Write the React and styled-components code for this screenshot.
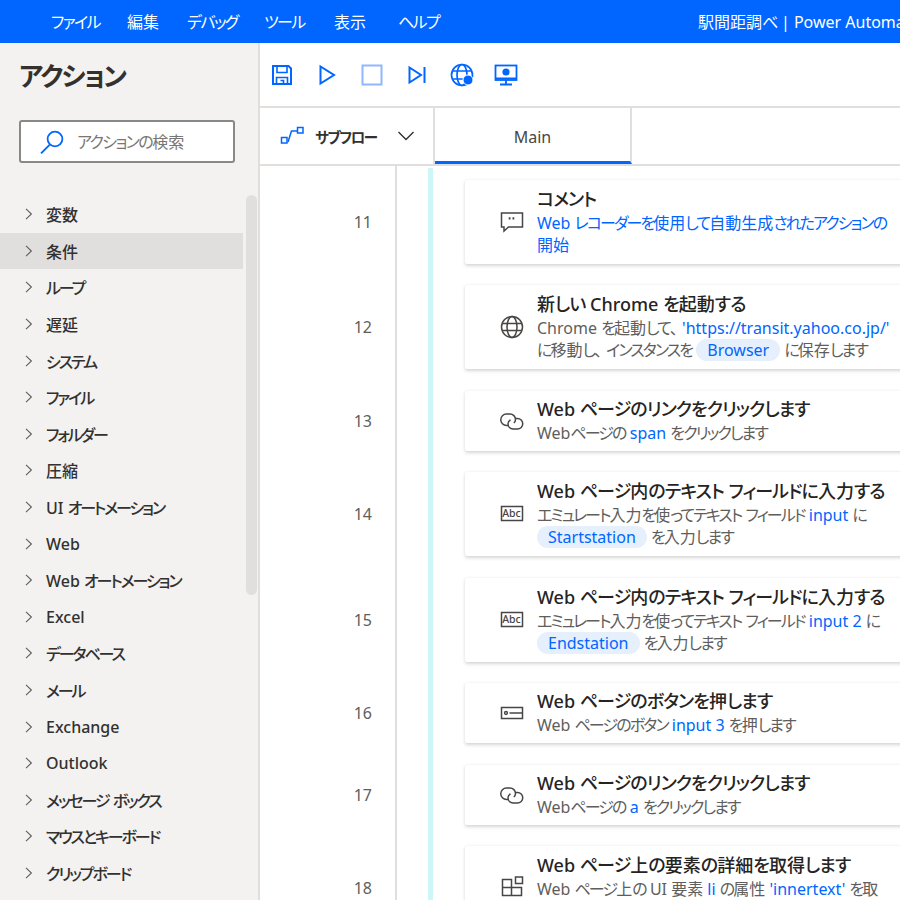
import React from 'react'
import styled, { createGlobalStyle } from 'styled-components'

const BLUE = '#0066ff'

const GlobalStyle = createGlobalStyle`
  html, body { margin: 0; padding: 0; background: #fff; }
  body {
    font-family: "Noto Sans", "Noto Sans CJK JP", sans-serif;
    font-feature-settings: "palt" 1;
    color: #252423;
  }
`

const Page = styled.div`
  width: 900px;
  height: 900px;
  overflow: hidden;
  display: flex;
  flex-direction: column;
`

const Header = styled.header`
  flex: 0 0 43px;
  box-sizing: border-box;
  background: ${BLUE};
  color: #fff;
  display: flex;
  align-items: center;
  padding: 0 0 2px 51px;
  font-size: 16px;
  white-space: nowrap;
  overflow: hidden;
`

const Menu = styled.nav`
  flex: 0 0 647px;
  display: flex;
`

const MenuItem = styled.span`
  flex: 0 0 ${(p) => p.$w}px;
`

// the original UI font sets kana much tighter than Noto does
const Kana = styled.span`
  letter-spacing: ${(p) => p.$ls || '-0.1em'};
`

const Comma = styled.span`
  letter-spacing: 4px;
`

const k = (text, ls) =>
  text.split(/([\u3041-\u30ff]+)/).map((part, i) =>
    i % 2 ? <Kana key={i} $ls={ls}>{part}</Kana> : part
  )

const sub = (text) => k(text, '-0.12em')

const Body = styled.div`
  flex: 1;
  display: flex;
  min-height: 0;
`

const Sidebar = styled.aside`
  flex: 0 0 258px;
  background: #f3f2f1;
  border-right: 2px solid #e1dfdd;
  display: flex;
  flex-direction: column;
  overflow: hidden;
`

const SidebarTitle = styled.h1`
  margin: 16px 0 0 19px;
  font-size: 26px;
  line-height: 34px;
  font-weight: 700;
  color: #323130;
`

const SearchBox = styled.div`
  margin: 27px 0 0 19px;
  width: 216px;
  height: 43px;
  box-sizing: border-box;
  background: #fff;
  border: 2px solid #8a8886;
  border-radius: 3px;
  display: flex;
  align-items: center;
  padding-left: 19px;
  gap: 13px;
  font-size: 16px;
  color: #797775;
`

const Placeholder = styled.span`
  padding-bottom: 2px;
`

const ListArea = styled.div`
  flex: 1;
  display: flex;
  margin-top: 33px;
  min-height: 0;
`

const ActionList = styled.ul`
  flex: 0 0 243px;
  margin: 0;
  padding: 0;
  list-style: none;
  display: flex;
  flex-direction: column;
`

const ActionItem = styled.li`
  flex: 0 0 36.6px;
  display: flex;
  align-items: center;
  padding-left: 25px;
  gap: 13px;
  font-size: 16px;
  font-weight: 500;
  color: #323130;
  white-space: nowrap;
  background: ${(p) => (p.$active ? '#e1dfdd' : 'transparent')};
`

const ScrollThumb = styled.div`
  margin: -1px 0 0 3px;
  width: 11px;
  height: 400px;
  border-radius: 6px;
  background: #e1dfdd;
`

const Main = styled.main`
  flex: 1;
  min-width: 0;
  display: flex;
  flex-direction: column;
  overflow: hidden;
`

const Toolbar = styled.div`
  flex: 0 0 63px;
  border-bottom: 2px solid #e1dfdd;
  display: flex;
  align-items: center;
`

const ToolButton = styled.div`
  flex: 0 0 44.8px;
  display: flex;
  justify-content: center;
`

const TabRow = styled.div`
  flex: 0 0 56px;
  border-bottom: 2px solid #e1dfdd;
  display: flex;
`

const SubflowTab = styled.div`
  flex: 0 0 175px;
  box-sizing: border-box;
  border-right: 2px solid #e1dfdd;
  display: flex;
  align-items: center;
  padding-left: 20px;
  font-size: 14.5px;
  font-weight: 700;
  color: #323130;
`

const SubflowLabel = styled.span`
  flex: 0 0 93px;
  padding-left: 11px;
  box-sizing: border-box;
`

const MainTab = styled.div`
  flex: 0 0 197px;
  box-sizing: border-box;
  border-right: 2px solid #e1dfdd;
  border-bottom: 3px solid ${BLUE};
  padding-top: 4px;
  display: flex;
  align-items: center;
  justify-content: center;
  font-size: 16px;
  color: #484644;
`

const Flow = styled.div`
  flex: 1;
  min-height: 0;
  display: flex;
  flex-direction: column;
  gap: 21.5px;
  padding-top: 13.8px;
  background:
    linear-gradient(#e1dfdd, #e1dfdd) 135px 0 / 2px 100% no-repeat,
    linear-gradient(#cdf6f6, #cdf6f6) 168px 2px / 5px 100% no-repeat;
`

const Row = styled.div`
  display: flex;
  align-items: center;
  flex-shrink: 0;
`

const LineNo = styled.div`
  flex: 0 0 112px;
  margin-right: 93px;
  text-align: right;
  font-size: 16px;
  color: #605e5c;
`

const Card = styled.article`
  flex: 0 0 560px;
  height: ${(p) => (p.$short ? 60 : 84)}px;
  box-sizing: border-box;
  border-radius: 2px;
  background: #fff;
  box-shadow: 0 1.6px 3.6px rgba(0, 0, 0, 0.16), 0 0 1px rgba(0, 0, 0, 0.05);
  display: flex;
  align-items: center;
  padding-left: 35px;
  gap: 13px;
`

const CardText = styled.div`
  white-space: nowrap;
`

const CardTitle = styled.div`
  font-size: 18px;
  line-height: 22px;
  padding-bottom: 2px;
  font-weight: 500;
  color: #252423;
`

const CardLine = styled.div`
  font-size: 16px;
  line-height: 22px;
  color: #605e5c;
`

const Link = styled.span`
  color: ${BLUE};
`

const Chip = styled.span`
  display: inline-block;
  line-height: 22px;
  padding: 0 11px;
  border-radius: 11px;
  background: #e6effc;
  color: ${BLUE};
`

const Chevron = () => (
  <svg width="8" height="12" viewBox="0 0 8 12" fill="none" stroke="#605e5c" strokeWidth="1.1">
    <path d="M1 .8 6.400 6 1 11.200" />
  </svg>
)

const blueIcon = { fill: 'none', stroke: BLUE, strokeWidth: 2 }

const SaveIcon = () => (
  <svg width="22" height="22" viewBox="0 0 22 22" {...blueIcon}>
    <path d="M2 2h15.500l2.500 2.500V20H2z" />
    <path d="M6 2v6.500h10V2M5.500 20v-6.500h11V20M9.500 16.500h3V20" strokeWidth="1.6" />
  </svg>
)

const PlayIcon = () => (
  <svg width="18" height="22" viewBox="0 0 18 22" {...blueIcon}>
    <path d="M2.500 2.500v17L16 11z" />
  </svg>
)

const StopIcon = () => (
  <svg width="22" height="22" viewBox="0 0 22 22" fill="none" stroke="#8db8ff" strokeWidth="2">
    <rect x="1.500" y="1.500" width="19" height="19" />
  </svg>
)

const NextIcon = () => (
  <svg width="20" height="22" viewBox="0 0 20 22" {...blueIcon}>
    <path d="M2.500 3.500v15L14 11zM17.500 3v16" />
  </svg>
)

const GlobeDotIcon = () => (
  <svg width="24" height="24" viewBox="0 0 24 24" fill="none" stroke={BLUE} strokeWidth="1.7">
    <circle cx="12" cy="12" r="10.500" />
    <ellipse cx="12" cy="12" rx="5" ry="10.500" />
    <path d="M2 8h20M2 16h20" />
    <circle cx="18" cy="17" r="5" fill={BLUE} stroke="#fff" strokeWidth="1" />
  </svg>
)

const MonitorIcon = () => (
  <svg width="24" height="22" viewBox="0 0 24 22" fill="none" stroke={BLUE} strokeWidth="1.800">
    <rect x="1.500" y="1.500" width="21" height="14.500" />
    <path d="M1.500 14.500h21M12 16v4M6 20.500h12" />
    <circle cx="12" cy="8" r="3.600" fill={BLUE} stroke="none" />
  </svg>
)

const SearchIcon = () => (
  <svg width="24" height="24" viewBox="0 0 24 24" fill="none" stroke={BLUE} strokeWidth="1.8">
    <circle cx="15" cy="9" r="7.400" />
    <path d="M9.800 14.600 1 23.400" />
  </svg>
)

const SubflowIcon = () => (
  <svg width="24" height="20" viewBox="0 0 24 20" fill="none" stroke={BLUE} strokeWidth="1.5">
    <rect x="1.500" y="11.500" width="5.500" height="5.500" />
    <rect x="17.500" y="1.500" width="5.500" height="5.500" />
    <path d="M8 16 11.500 5H17" />
  </svg>
)

const DownIcon = () => (
  <svg width="18" height="12" viewBox="0 0 18 12" fill="none" stroke="#323130" strokeWidth="1.4">
    <path d="M1.500 2 9 9.500 16.500 2" />
  </svg>
)

const gray = { fill: 'none', stroke: '#484644', strokeWidth: 1.5 }

const CommentIcon = () => (
  <svg width="24" height="24" viewBox="0 0 24 24" {...gray}>
    <path d="M1.500 3h21v14H8.500l-4.500 4v-4H1.500z" />
    <path d="M9.600 7.200v2.400M13.400 7.200v2.400" strokeWidth="1.800" />
  </svg>
)

const GlobeIcon = () => (
  <svg width="24" height="24" viewBox="0 0 24 24" {...gray}>
    <circle cx="12" cy="12" r="10.500" />
    <ellipse cx="12" cy="12" rx="5" ry="10.500" />
    <path d="M2 8.500h20M2 15.500h20" />
  </svg>
)

const LinkIcon = () => (
  <svg width="24" height="24" viewBox="0 0 24 24" {...gray}>
    <path d="M8 16.500H6.500a5.700 5.700 0 0 1 0-11.500H10a5.500 5.500 0 0 1 5.500 5.500c0 1.500-.6 2.700-1.700 3.500" />
    <path d="M16 9.500h1.500a5.200 5.200 0 0 1 0 10.500H13a5.200 5.200 0 0 1-5-5.200c0-1.800 1-3.200 2.500-4" />
  </svg>
)

const AbcIcon = () => (
  <svg width="24" height="24" viewBox="0 0 24 24" {...gray}>
    <rect x="1.500" y="4.500" width="21" height="14" />
    <text x="11.500" y="15" textAnchor="middle" fontSize="10.500" fontWeight="500" fill="#484644" stroke="none">Abc</text>
  </svg>
)

const ButtonIcon = () => (
  <svg width="24" height="24" viewBox="0 0 24 24" {...gray}>
    <rect x="1.500" y="6.500" width="21" height="11" />
    <circle cx="6" cy="12" r="1.400" />
    <path d="M9.500 12h13" />
  </svg>
)

const ElementIcon = () => (
  <svg width="24" height="24" viewBox="0 0 24 24" {...gray}>
    <path d="M2.500 3.500h9v16h-9zM2.500 11.500h19v8h-10" />
    <rect x="15.500" y="1" width="7" height="6.500" />
  </svg>
)

const MENU = [
  { label: 'ファイル', w: 76 },
  { label: '編集', w: 60 },
  { label: 'デバッグ', w: 77 },
  { label: 'ツール', w: 70 },
  { label: '表示', w: 64 },
  { label: 'ヘルプ', w: 60 },
]

const ACTIONS = [
  '変数', '条件', 'ループ', '遅延', 'システム', 'ファイル', 'フォルダー', '圧縮', 'UI オートメーション',
  'Web', 'Web オートメーション', 'Excel', 'データベース', 'メール', 'Exchange', 'Outlook',
  'メッセージ ボックス', 'マウスとキーボード', 'クリップボード',
]

const STEPS = [
  {
    no: 11, icon: <CommentIcon />, title: 'コメント',
    lines: [<Link>{sub('Web レコーダーを使用して自動生成されたアクションの')}</Link>, <Link>開始</Link>],
  },
  {
    no: 12, icon: <GlobeIcon />, title: '新しい Chrome を起動する',
    lines: [
      <>{sub('Chrome を起動して、 ')}<Link>'https://transit.yahoo.co.jp/'</Link></>,
      <>{sub('に移動し')}<Comma>、</Comma>{sub('インスタンスを ')}<Chip>Browser</Chip>{sub(' に保存します')}</>,
    ],
  },
  {
    no: 13, icon: <LinkIcon />, title: 'Web ページのリンクをクリックします', short: true,
    lines: [<>{sub('Webページの ')}<Link>span</Link>{sub(' をクリックします')}</>],
  },
  {
    no: 14, icon: <AbcIcon />, title: 'Web ページ内のテキスト フィールドに入力する',
    lines: [
      <>{sub('エミュレート入力を使ってテキスト フィールド ')}<Link>input</Link>{sub(' に')}</>,
      <><Chip>Startstation</Chip>{sub(' を入力します')}</>,
    ],
  },
  {
    no: 15, icon: <AbcIcon />, title: 'Web ページ内のテキスト フィールドに入力する',
    lines: [
      <>{sub('エミュレート入力を使ってテキスト フィールド ')}<Link>input 2</Link>{sub(' に')}</>,
      <><Chip>Endstation</Chip>{sub(' を入力します')}</>,
    ],
  },
  {
    no: 16, icon: <ButtonIcon />, title: 'Web ページのボタンを押します', short: true,
    lines: [<>{sub('Web ページのボタン ')}<Link>input 3</Link>{sub(' を押します')}</>],
  },
  {
    no: 17, icon: <LinkIcon />, title: 'Web ページのリンクをクリックします', short: true,
    lines: [<>{sub('Webページの ')}<Link>a</Link>{sub(' をクリックします')}</>],
  },
  {
    no: 18, icon: <ElementIcon />, title: 'Web ページ上の要素の詳細を取得します',
    lines: [
      <>{sub('Web ページ上の UI 要素 ')}<Link>li</Link>{sub(' の属性 ')}<Link>'innertext'</Link>{sub(' を取')}</>,
      <>{sub('得します')}</>,
    ],
  },
]

const TOOLS = [SaveIcon, PlayIcon, StopIcon, NextIcon, GlobeDotIcon, MonitorIcon]

export default function App() {
  return (
    <Page>
      <GlobalStyle />
      <Header>
        <Menu>
          {MENU.map((m) => (
            <MenuItem key={m.label} $w={m.w}>{k(m.label)}</MenuItem>
          ))}
        </Menu>
        <span>{k('駅間距調べ | Power Automate')}</span>
      </Header>
      <Body>
        <Sidebar>
          <SidebarTitle>{k('アクション', '-0.07em')}</SidebarTitle>
          <SearchBox>
            <SearchIcon />
            <Placeholder>{k('アクションの検索')}</Placeholder>
          </SearchBox>
          <ListArea>
            <ActionList>
              {ACTIONS.map((a) => (
                <ActionItem key={a} $active={a === '条件'}>
                  <Chevron />
                  <span>{k(a, '-0.13em')}</span>
                </ActionItem>
              ))}
            </ActionList>
            <ScrollThumb />
          </ListArea>
        </Sidebar>
        <Main>
          <Toolbar>
            {TOOLS.map((Icon, i) => (
              <ToolButton key={i}>
                <Icon />
              </ToolButton>
            ))}
          </Toolbar>
          <TabRow>
            <SubflowTab>
              <SubflowIcon />
              <SubflowLabel>{k('サブフロー')}</SubflowLabel>
              <DownIcon />
            </SubflowTab>
            <MainTab>Main</MainTab>
          </TabRow>
          <Flow>
            {STEPS.map((s) => (
              <Row key={s.no}>
                <LineNo>{s.no}</LineNo>
                <Card $short={s.short}>
                  {s.icon}
                  <CardText>
                    <CardTitle>{k(s.title, '-0.05em')}</CardTitle>
                    {s.lines.map((l, i) => (
                      <CardLine key={i}>{l}</CardLine>
                    ))}
                  </CardText>
                </Card>
              </Row>
            ))}
          </Flow>
        </Main>
      </Body>
    </Page>
  )
}
